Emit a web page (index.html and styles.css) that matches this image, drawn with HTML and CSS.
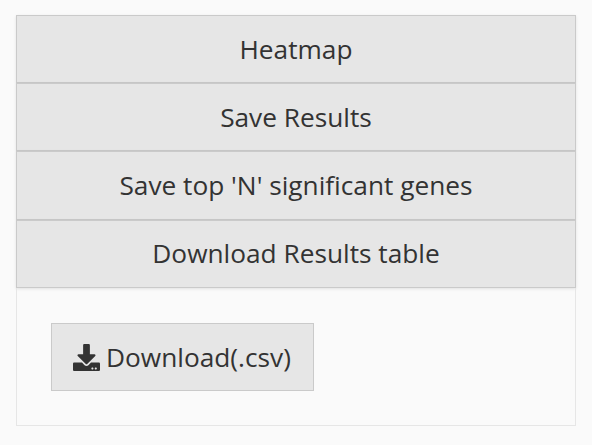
FILE: index.html
```html
<!DOCTYPE html>
<html lang="en">
<head>
<meta charset="utf-8">
<title>Results</title>
<link rel="stylesheet" href="styles.css">
</head>
<body>
<main class="accordion">
<button class="item">Heatmap</button>
<button class="item">Save Results</button>
<button class="item item-tall">Save top 'N' significant genes</button>
<button class="item">Download Results table</button>
<section class="panel">
<button class="download">
<svg class="icon" viewBox="0 0 512 512"><path d="M216 0h80c13.300 0 24 10.700 24 24v168h87.700c17.800 0 26.700 21.500 14.100 34.100L269.700 378.300c-7.500 7.500-19.800 7.500-27.300 0L90.100 226.100c-12.600-12.600-3.700-34.100 14.100-34.100H192V24c0-13.300 10.700-24 24-24zm296 376v112c0 13.300-10.700 24-24 24H24c-13.300 0-24-10.700-24-24V376c0-13.300 10.700-24 24-24h146.700l49 49c20.100 20.100 52.500 20.100 72.600 0l49-49H488c13.300 0 24 10.700 24 24zm-124 88c0-11-9-20-20-20s-20 9-20 20 9 20 20 20 20-9 20-20zm64 0c0-11-9-20-20-20s-20 9-20 20 9 20 20 20 20-9 20-20z"/></svg>
<span>Download(.csv)</span>
</button>
</section>
</main>
</body>
</html>
```
FILE: styles.css
```css
* { box-sizing: border-box; }
body {
  margin: 0;
  background: #fafafa;
  color: #333;
  font-family: "Open Sans", sans-serif;
}
.accordion {
  display: flex;
  flex-direction: column;
  padding: 15px 16px 0;
}
.item, .download {
  font: 400 26.250px/36px "Open Sans", sans-serif;
  color: #333;
  background: #e6e6e6;
  border: 1px solid #cacaca;
  border-radius: 0;
  margin: 0;
}
.item {
  height: 68px;
  padding: 0;
  box-shadow: 0 1px 3px rgba(0, 0, 0, .1);
}
.item-tall {
  height: 69px;
  padding-bottom: 1px;
}
.item-tall + .item {
  padding-bottom: 2px;
}
.panel {
  height: 138px;
  padding: 35px;
  border: 1px solid #e6e6e6;
  border-top: 0;
  padding-left: 34px;
}
.download {
  display: flex;
  align-items: center;
  gap: 6px;
  width: 263px;
  height: 68px;
  padding: 0 21px;
  white-space: nowrap;
}
.icon {
  width: 27px;
  height: 27px;
  fill: #333;
  flex: none;
}
```
